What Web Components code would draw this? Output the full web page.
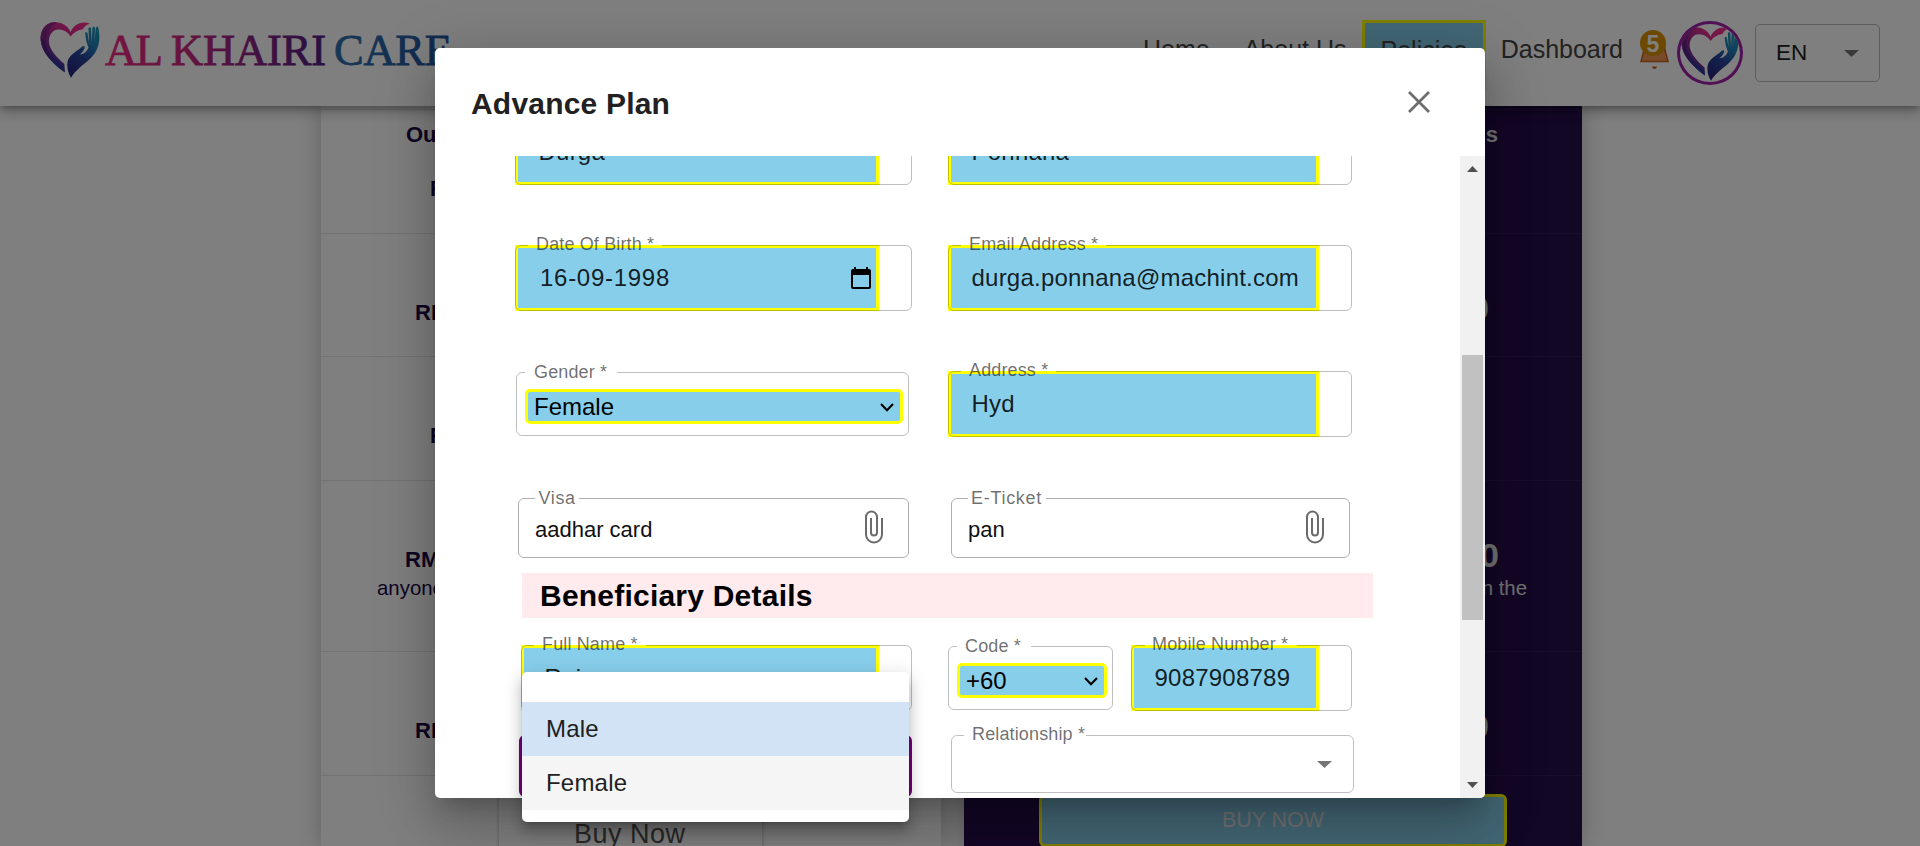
<!DOCTYPE html>
<html lang="en">
<head>
<meta charset="utf-8">
<title>Al Khairi Care</title>
<style>
html,body{margin:0;height:846px;overflow:hidden;background:#fff;font-family:"Liberation Sans",Arial,sans-serif}
</style>
</head>
<body>
<care-app></care-app>
<script>
const define=(name,html)=>{
  const t=document.createElement('template');t.innerHTML=html;
  customElements.define(name,class extends HTMLElement{
    constructor(){super();this.attachShadow({mode:'open'});}
    connectedCallback(){
      if(this.shadowRoot.childNodes.length)return;
      this.shadowRoot.append(t.content.cloneNode(true));
      this.shadowRoot.querySelectorAll('[data-attr]').forEach(e=>{e.textContent=this.getAttribute(e.dataset.attr)||'';});
    }
  });
};

define('heart-hand',`
<style>:host{display:block}svg{display:block;width:100%;height:100%}</style>
<svg viewBox="0 0 182 172" preserveAspectRatio="none">
<defs>
<linearGradient id="r" x1=".95" y1="0" x2=".2" y2="1"><stop offset="0" stop-color="#ff2f8e"/><stop offset=".3" stop-color="#e02c90"/><stop offset=".6" stop-color="#8a2a90"/><stop offset="1" stop-color="#2a3a98"/></linearGradient>
<linearGradient id="l" x1="0" y1="0" x2=".3" y2="1"><stop offset="0" stop-color="#b02a88"/><stop offset=".45" stop-color="#5a2080"/><stop offset="1" stop-color="#2a3aa0"/></linearGradient>
<linearGradient id="h" x1=".8" y1="0" x2=".3" y2="1"><stop offset="0" stop-color="#1c94b8"/><stop offset=".3" stop-color="#2080b8"/><stop offset=".6" stop-color="#27459c"/><stop offset="1" stop-color="#26267c"/></linearGradient>
</defs>
<path fill="url(#r)" d="M93 33C82 10 60 2 42 4C15 6 0 30 2 58C6 95 35 125 75 155L74 130C50 110 28 85 27 62C27 40 40 24 58 26C75 27 86 36 93 47C100 38 110 28 130 25Q136 12 152 8C130 0 105 6 93 33Z"/>
<path fill="url(#l)" d="M42 4C15 6 0 30 2 58C6 95 35 125 75 155L73 139C40 112 16 88 17 58C18 32 30 16 52 5Z"/>
<path fill="url(#h)" d="M94 171C84 156 80 135 85 118C92 100 115 90 127 78Q137 72 135 82C133 90 126 96 121 101C133 101 143 92 147 80Q138 60 137 37Q139 30 144 36L149 66L147 23Q151 14 155 23L157 66L159 21Q163 12 167 21L165 66L169 22Q173 12 177 20C186 60 176 92 152 114C132 132 108 148 94 171Z"/>
</svg>`);

define('brand-logo',`
<style>:host{display:flex;align-items:flex-start;height:60px}heart-hand{width:60px;height:57px;margin-top:1px}
svg{display:block;width:350px;height:60px;margin-left:4px;overflow:visible}text{font-family:"Liberation Serif",serif;font-size:44.5px}</style>
<heart-hand></heart-hand>
<svg viewBox="0 0 350 60"><defs>
<linearGradient id="p" gradientUnits="userSpaceOnUse" x1="0" y1="0" x2="224" y2="0"><stop offset="0" stop-color="#ee2a84"/><stop offset=".35" stop-color="#cc287e"/><stop offset=".65" stop-color="#8c2382"/><stop offset="1" stop-color="#4f2084"/></linearGradient>
<linearGradient id="b" gradientUnits="userSpaceOnUse" x1="230" y1="0" x2="350" y2="0"><stop offset="0" stop-color="#2d70ac"/><stop offset="1" stop-color="#24539c"/></linearGradient></defs>
<text x="1" y="44.5" fill="url(#p)" stroke="url(#p)" stroke-width=".8" textLength="58">AL</text>
<text x="67" y="44.5" fill="url(#p)" stroke="url(#p)" stroke-width=".8" textLength="155">KHAIRI</text>
<text x="230" y="44.5" fill="url(#b)" stroke="url(#b)" stroke-width=".8" textLength="118">CARE</text></svg>`);

define('nav-link',`
<style>:host{display:block;box-sizing:border-box;height:42px;padding:0 17px;line-height:42px;font-size:25px;color:#444;white-space:nowrap}
:host([active]){height:70px;border:3px solid #ff0;background:#87ceeb;padding:0 16px;line-height:54px}</style><slot></slot>`);

define('bell-badge',`
<style>:host{display:block;position:relative;width:29px;height:40px}svg{display:block}
span{position:absolute;left:0;top:0;width:26px;height:26px;border-radius:50%;background:#d89000;color:#fff;font:bold 23px/28px "Liberation Sans",sans-serif;text-align:center}</style>
<svg width="29" height="40"><path d="M4 20Q5 4 14 3Q24 4 25 20L28 31.5H1Z" fill="#ee9752" stroke="#c8601c" stroke-width="1.5"/><path d="M12 36.5H17Q16.500 39 14.500 39Q12.500 39 12 36.500Z" fill="#c8601c"/></svg><span>5</span>`);

define('lang-select',`
<style>:host{display:flex;box-sizing:border-box;width:125px;height:58px;border:1px solid #bbb;border-radius:5px;align-items:center;justify-content:space-between;padding:0 20px 0 20px;color:#222;font-size:22.5px}</style>
<span><slot></slot></span><svg width="15" height="7"><path d="M0 0H15L7.5 7Z" fill="#757575"/></svg>`);

define('site-header',`
<style>:host{display:flex;box-sizing:border-box;height:106px;background:#fff;position:relative;box-shadow:0 3px 5px -1px rgba(0,0,0,.2),0 6px 12px rgba(0,0,0,.28);padding:20px 40px 0 40px}
nav{display:flex;margin-left:auto;align-items:flex-start}
nav-link{margin-top:8px}nav-link[active]{margin-top:0;margin-left:-2px;margin-right:-2px}
bell-badge{margin:10px 8px 0 0}.av{box-sizing:border-box;width:66px;height:64px;border:3px solid #a020a8;border-radius:50%;margin:1px 12px 0 0;overflow:hidden}
.av heart-hand{width:58px;height:55px;margin:2px 1px}lang-select{margin-top:4px}</style>
<brand-logo></brand-logo>
<nav><nav-link>Home</nav-link><nav-link>About Us</nav-link><nav-link active>Policies</nav-link><nav-link>Dashboard</nav-link>
<bell-badge></bell-badge><div class="av"><heart-hand></heart-hand></div><lang-select>EN</lang-select></nav>`);

define('plan-row',`
<style>:host{display:block;box-sizing:border-box;height:123.6px;border-bottom:1px solid var(--line);overflow:hidden;white-space:nowrap}
:host([tall]){height:171.4px}
.a{height:52px;font:bold 22px/50px "Liberation Sans",sans-serif}.b{height:28px;margin-top:13px;font:bold var(--bs,22px)/var(--bl,28px) "Liberation Sans",sans-serif}
.c{height:29px;font-size:20.4px;line-height:29px}</style>
<div class="a"><slot name="a"></slot></div><div class="b"><slot name="b"></slot></div><div class="c"><slot></slot></div>`);

define('plan-card',`
<style>:host{display:block;box-sizing:border-box;height:740px;box-shadow:0 0 22px rgba(0,0,0,.25);background:#fff;color:#1d0846;--line:#e6e6e6}
:host([dark]){background:#260e4c;color:#e2e2e2;text-align:right;--line:#32195a;--bs:34px;--bl:19px}
.top{height:4px;border-bottom:1px solid var(--line);box-sizing:border-box}</style>
<div class="top"></div><slot></slot>`);

define('plans-page',`
<style>:host{display:flex;gap:23px;padding-left:321px;height:740px;overflow:hidden}
plan-card{width:620px}plan-card[dark]{width:618px}
span{display:inline-block}
.buy{box-sizing:border-box;width:263px;height:70px;margin-left:178px;margin-top:15px;box-shadow:0 0 4px rgba(0,0,0,.3);padding-left:75px;font-size:27px;line-height:86px;letter-spacing:.5px;color:#555;white-space:nowrap}
.cta{box-sizing:border-box;width:468px;height:53px;margin:18px 0 0 75px;border:3px solid #ff0;border-radius:6px;background:#87ceeb;color:#e4e4e4;text-align:center;font-size:21.4px;line-height:46px}</style>
<plan-card>
<plan-row><span slot="a" style="margin-left:85px">Ou</span><span slot="b" style="margin-left:109px">R</span></plan-row>
<plan-row><span slot="b" style="margin-left:94px">RM</span></plan-row>
<plan-row><span slot="b" style="margin-left:109px">R</span></plan-row>
<plan-row tall><span slot="b" style="margin-left:84px">RM</span><span style="margin-left:56px">anyone</span></plan-row>
<plan-row><span slot="b" style="margin-left:94px">RM</span></plan-row>
<div class="buy">Buy Now</div>
</plan-card>
<plan-card dark>
<plan-row><span slot="a" style="margin-right:84px">s</span></plan-row>
<plan-row><span slot="b" style="margin-right:93px">0</span></plan-row>
<plan-row></plan-row>
<plan-row tall><span slot="b" style="margin-right:83px">0</span><span style="margin-right:55px">n the</span></plan-row>
<plan-row><span slot="b" style="margin-right:93px">0</span></plan-row>
<div class="cta">BUY NOW</div>
</plan-card>`);

/* Outlined field: slot content fills the box, the outline and the label lie over it. */
define('form-field',`
<style>:host{display:block;position:relative;box-sizing:border-box;width:var(--w);height:var(--h,66px);flex:none}
fieldset{position:absolute;inset:0;margin:0;padding:0;border:1px solid var(--oc,rgba(0,0,0,.25));border-radius:6px;min-width:0;pointer-events:none}
legend{height:1px;padding:0;margin-left:var(--nx,12px);width:var(--nw,0)}
label{position:absolute;left:var(--lx,22px);top:var(--ly,-11px);font-size:18px;line-height:20px;letter-spacing:var(--ls,.14px);color:rgba(0,0,0,.58);white-space:nowrap}
.in{display:flex;box-sizing:border-box;height:100%}</style>
<div class="in"><slot></slot></div><fieldset><legend></legend></fieldset><label data-attr="label"></label>`);

define('fill-input',`
<style>:host{display:flex;align-items:center;box-sizing:border-box;width:var(--fw);height:100%;border:3px solid #ff0;background:#87ceeb;padding:0 6px 0 var(--px,20.5px);font-size:24px;letter-spacing:.225px;color:rgba(0,0,0,.87);white-space:nowrap}
svg{margin-left:auto;display:none}:host([date]) svg{display:block;margin-right:-1px}:host([date]){letter-spacing:.72px}</style>
<slot></slot><svg width="20" height="22" viewBox="0 0 20 22"><path fill="#000" fill-rule="evenodd" d="M3 0H5V2H15V0H17V2H18Q20 2 20 4V20Q20 22 18 22H2Q0 22 0 20V4Q0 2 2 2H3ZM2 8V20H18V8Z"/></svg>`);

define('fill-select',`
<style>:host{display:flex;align-items:center;justify-content:space-between;box-sizing:border-box;height:35px;width:var(--sw);margin:17px 0 0 9px;border:3px solid #ff0;border-radius:5px;background:#87ceeb;padding:1px 6px 0;font-size:24px;color:#000}</style>
<span><slot></slot></span><svg width="14" height="9" viewBox="0 0 14 9"><path d="M1 1L7 7.3L13 1" fill="none" stroke="#000" stroke-width="2.1"/></svg>`);

define('file-input',`
<style>:host{display:flex;align-items:center;justify-content:space-between;width:100%;height:100%;box-sizing:border-box;padding:0 26px 0 17px;font-size:22px;color:#111}svg{margin-top:-3px}span{margin-top:4px}</style>
<span><slot></slot></span><svg width="18" height="34" viewBox="0 0 18 34"><path d="M17 8V24.5A8 8 0 0 1 1 24.5V7A5.5 5.5 0 0 1 12 7V22.5A3 3 0 0 1 6 22.5V8" fill="none" stroke="#6b6b6b" stroke-width="2"/></svg>`);

define('down-arrow',`<style>:host{display:block}svg{display:block}</style><svg width="15" height="7"><path d="M0 0H15L7.5 7Z" fill="#757575"/></svg>`);

define('section-title',`<style>:host{display:block;width:851px;height:45px;box-sizing:border-box;background:#ffebee;padding-left:18px;font:bold 30px/45px "Liberation Sans",sans-serif;letter-spacing:.22px;color:#000}</style><slot></slot>`);

define('scroll-bar',`
<style>:host{display:flex;flex-direction:column;align-items:center;width:25px;background:#f1f1f1;box-sizing:border-box;padding:10px 0}
.t{width:21px;height:265px;margin-top:183px;background:#c1c1c1}.d{margin-top:auto}svg{display:block}</style>
<svg width="11" height="6"><path d="M0 6L5.5 0L11 6Z" fill="#505050"/></svg><div class="t"></div><svg class="d" width="11" height="6"><path d="M0 0H11L5.5 6Z" fill="#505050"/></svg>`);

define('plan-dialog',`
<style>:host{display:flex;flex-direction:column;width:1050px;height:750px;background:#fff;border-radius:5px;overflow:hidden;box-shadow:0 14px 19px -9px rgba(0,0,0,.2),0 30px 48px 4px rgba(0,0,0,.14),0 11px 58px 10px rgba(0,0,0,.12)}
header{display:flex;justify-content:space-between;height:108px;flex:none;box-sizing:border-box;padding:0 55px 0 36px;font:bold 30px/111px "Liberation Sans",sans-serif;letter-spacing:.2px;color:#212121}
header svg{margin-top:43px}
.body{display:flex;flex:1;min-height:0}.form{flex:1;overflow:hidden}
.row{display:flex;margin-bottom:60px}.first{margin-top:-37px}</style>
<header><span>Advance Plan</span><svg width="22" height="22" viewBox="0 0 22 22"><path d="M1 1L21 21M21 1L1 21" stroke="#6d6d6d" stroke-width="2.7"/></svg></header>
<div class="body"><div class="form">
<div class="row first" style="padding-left:80px;gap:36px">
<form-field style="--w:397px"><fill-input style="--fw:364px">Durga</fill-input></form-field>
<form-field style="--w:404px"><fill-input style="--fw:371px">Ponnana</fill-input></form-field></div>
<div class="row" style="padding-left:80px;gap:36px">
<form-field label="Date Of Birth *" style="--w:397px;--nw:134px;--lx:21px"><fill-input date style="--fw:364px;--px:22px">16-09-1998</fill-input></form-field>
<form-field label="Email Address *" style="--w:404px;--nw:145px;--lx:21px"><fill-input style="--fw:371px">durga.ponnana@machint.com</fill-input></form-field></div>
<div class="row" style="padding-left:81px;gap:39px">
<form-field label="Gender *" style="--w:393px;--h:64px;--nx:8px;--nw:92px;--lx:18px;--ly:-10px;margin-top:1px"><fill-select style="--sw:378px">Female</fill-select></form-field>
<form-field label="Address *" style="--w:404px;--nw:95px;--lx:21px"><fill-input style="--fw:371px">Hyd</fill-input></form-field></div>
<div class="row" style="padding-left:83px;gap:42px;margin:61px 0 15px">
<form-field label="Visa" style="--w:391px;--h:60px;--oc:#b0b0b0;--nx:16px;--nw:44px;--lx:20.5px;--ly:-10px;--ls:.6px"><file-input>aadhar card</file-input></form-field>
<form-field label="E-Ticket" style="--w:399px;--h:60px;--oc:#b0b0b0;--nx:16px;--nw:78px;--lx:20px;--ly:-10px;--ls:.7px"><file-input>pan</file-input></form-field></div>
<section-title style="margin-left:87px">Beneficiary Details</section-title>
<div class="row" style="padding-left:86px;margin:27px 0 23px">
<form-field label="Full Name *" style="--w:391px;--nw:112px;--lx:21px"><fill-input style="--fw:358px">Raja</fill-input></form-field>
<form-field label="Code *" style="--w:165px;--h:64px;--nx:8px;--nw:74px;--lx:17px;--ly:-10px;margin:1px 18px 0 36px"><fill-select style="--sw:150px">+60</fill-select></form-field>
<form-field label="Mobile Number *" style="--w:221px;--nx:13px;--nw:152px;--lx:21px"><fill-input style="--fw:188px">9087908789</fill-input></form-field></div>
<div class="row" style="padding-left:84px;gap:39px;align-items:flex-start">
<form-field style="--w:393px;--h:62px;margin-top:1px;background:#fff;box-sizing:border-box;border:3px solid #750078;border-radius:6px;--oc:transparent"></form-field>
<form-field label="Relationship *" style="--w:403px;--h:58px;--nx:12px;--nw:122px;--lx:21px;--ly:-11px;margin-top:1px"><down-arrow style="margin:26px 0 0 366px"></down-arrow></form-field></div>
</div><scroll-bar></scroll-bar></div>`);

define('menu-item',`<style>:host{display:block;height:54px;padding-left:24px;font-size:24px;line-height:54px;letter-spacing:.2px;color:#212121;background:#f5f5f5}:host([selected]){background:#d1e3f5}</style><slot></slot>`);

define('option-menu',`
<style>:host{display:block;box-sizing:border-box;width:387px;height:150px;padding-top:30px;background:#fff;border-radius:5px;box-shadow:0 6px 6px -4px rgba(0,0,0,.2),0 10px 12px 1px rgba(0,0,0,.14),0 4px 18px 3px rgba(0,0,0,.12)}</style><slot></slot>`);

define('care-app',`
<style>:host{display:block;position:relative;width:1920px;height:846px;overflow:hidden}
.page{height:846px}site-header{z-index:1}
.veil{position:absolute;inset:0;z-index:2;background:rgba(0,0,0,.5);display:flex;align-items:center;justify-content:center}
option-menu{position:absolute;left:522px;top:672px;z-index:3}</style>
<div class="page"><site-header></site-header><plans-page></plans-page></div>
<div class="veil"><plan-dialog></plan-dialog></div>
<option-menu><menu-item selected>Male</menu-item><menu-item>Female</menu-item></option-menu>`);
</script>
</body>
</html>
